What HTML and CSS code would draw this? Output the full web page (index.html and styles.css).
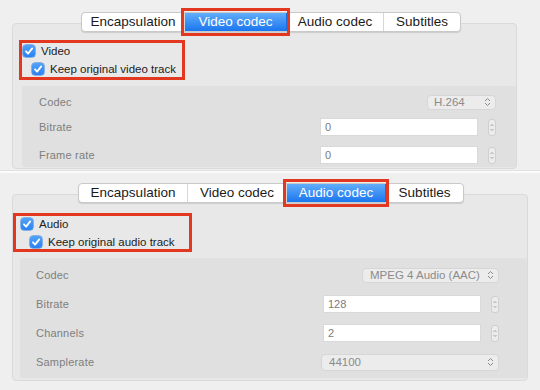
FILE: index.html
```html
<!DOCTYPE html>
<html>
<head>
<meta charset="utf-8">
<link rel="stylesheet" href="styles.css">
</head>
<body>
<div class="shot">
  <section class="panel panel-video">
    <div class="tabs tabs-video">
      <div class="tab">Encapsulation</div>
      <div class="tab selected">Video codec</div>
      <div class="tab">Audio codec</div>
      <div class="tab">Subtitles</div>
    </div>
    <div class="group group-video">
      <div class="checks checks-video">
        <div class="check"><span class="box"><svg width="12" height="12" viewBox="0 0 12 12"><path d="M3 6.3 L5.1 8.6 L9.2 3.4" fill="none" stroke="#fff" stroke-width="1.8" stroke-linecap="round" stroke-linejoin="round"/></svg></span>Video</div>
        <div class="check sub"><span class="box"><svg width="12" height="12" viewBox="0 0 12 12"><path d="M3 6.3 L5.1 8.6 L9.2 3.4" fill="none" stroke="#fff" stroke-width="1.8" stroke-linecap="round" stroke-linejoin="round"/></svg></span>Keep original video track</div>
      </div>
      <div class="settings settings-video">
        <div class="row">
          <span class="label">Codec</span>
          <span class="popup popup-h264"><span class="val">H.264</span><svg class="arrows" width="7" height="10" viewBox="0 0 7 10"><path d="M1 4 L3.5 1.5 L6 4 M1 6 L3.5 8.5 L6 6" fill="none" stroke="#8a8a8a" stroke-width="1"/></svg></span>
        </div>
        <div class="row">
          <span class="label">Bitrate</span>
          <span class="field">0</span>
          <span class="stepper"><svg width="8" height="15" viewBox="0 0 8 15"><path d="M2 5.5 L4 3.5 L6 5.5 M2 9.5 L4 11.5 L6 9.5" fill="none" stroke="#8c8c8c" stroke-width="1"/></svg></span>
        </div>
        <div class="row">
          <span class="label">Frame rate</span>
          <span class="field">0</span>
          <span class="stepper"><svg width="8" height="15" viewBox="0 0 8 15"><path d="M2 5.5 L4 3.5 L6 5.5 M2 9.5 L4 11.5 L6 9.5" fill="none" stroke="#8c8c8c" stroke-width="1"/></svg></span>
        </div>
      </div>
    </div>
  </section>
  <div class="divider"></div>
  <section class="panel panel-audio">
    <div class="tabs tabs-audio">
      <div class="tab">Encapsulation</div>
      <div class="tab">Video codec</div>
      <div class="tab selected">Audio codec</div>
      <div class="tab">Subtitles</div>
    </div>
    <div class="group group-audio">
      <div class="checks checks-audio">
        <div class="check"><span class="box"><svg width="12" height="12" viewBox="0 0 12 12"><path d="M3 6.3 L5.1 8.6 L9.2 3.4" fill="none" stroke="#fff" stroke-width="1.8" stroke-linecap="round" stroke-linejoin="round"/></svg></span>Audio</div>
        <div class="check sub"><span class="box"><svg width="12" height="12" viewBox="0 0 12 12"><path d="M3 6.3 L5.1 8.6 L9.2 3.4" fill="none" stroke="#fff" stroke-width="1.8" stroke-linecap="round" stroke-linejoin="round"/></svg></span>Keep original audio track</div>
      </div>
      <div class="settings settings-audio">
        <div class="row">
          <span class="label">Codec</span>
          <span class="popup popup-mpeg"><span class="val">MPEG 4 Audio (AAC)</span><svg class="arrows" width="7" height="10" viewBox="0 0 7 10"><path d="M1 4 L3.5 1.5 L6 4 M1 6 L3.5 8.5 L6 6" fill="none" stroke="#8a8a8a" stroke-width="1"/></svg></span>
        </div>
        <div class="row">
          <span class="label">Bitrate</span>
          <span class="field">128</span>
          <span class="stepper"><svg width="8" height="15" viewBox="0 0 8 15"><path d="M2 5.5 L4 3.5 L6 5.5 M2 9.5 L4 11.5 L6 9.5" fill="none" stroke="#8c8c8c" stroke-width="1"/></svg></span>
        </div>
        <div class="row">
          <span class="label">Channels</span>
          <span class="field">2</span>
          <span class="stepper"><svg width="8" height="15" viewBox="0 0 8 15"><path d="M2 5.5 L4 3.5 L6 5.5 M2 9.5 L4 11.5 L6 9.5" fill="none" stroke="#8c8c8c" stroke-width="1"/></svg></span>
        </div>
        <div class="row">
          <span class="label">Samplerate</span>
          <span class="popup popup-rate"><span class="val">44100</span><svg class="arrows" width="7" height="10" viewBox="0 0 7 10"><path d="M1 4 L3.5 1.5 L6 4 M1 6 L3.5 8.5 L6 6" fill="none" stroke="#8a8a8a" stroke-width="1"/></svg></span>
        </div>
      </div>
    </div>
  </section>
</div>
</body>
</html>
```

FILE: styles.css
```css
* { box-sizing: border-box; }

html, body {
  margin: 0;
  padding: 0;
  background: #efefef;
}

body {
  font-family: "Liberation Sans", Arial, Helvetica, sans-serif;
  color: #1e1e1e;
}

.shot {
  width: 540px;
  height: 390px;
  overflow: hidden;
  display: flex;
  flex-direction: column;
}

.panel {
  display: flex;
  flex-direction: column;
  background: #efefef;
}

.panel-video {
  height: 170px;
  padding-top: 12px;
}

.divider {
  height: 3px;
  background: #fbfbfb;
  border-top: 1px solid #e2e2e2;
}

.panel-audio {
  flex: 1;
  padding-top: 10px;
}

/* segmented tabs */
.tabs {
  position: relative;
  z-index: 2;
  display: flex;
  height: 20px;
  background: #fff;
  border: 1px solid #c9c9c9;
  border-radius: 4px;
  box-shadow: 0 1px 1px rgba(0, 0, 0, 0.12);
  align-self: flex-start;
}

.tabs-video { margin-left: 81px; }
.tabs-audio { margin-left: 78px; }

.tab {
  position: relative;
  font-size: 13.5px;
  line-height: 18px;
  text-align: center;
  color: #1a1a1a;
  border-right: 1px solid #d6d6d6;
}

.tab:last-child { border-right: none; }

.tabs-video .tab:nth-child(1) { width: 103px; }
.tabs-video .tab:nth-child(2) { width: 102px; }
.tabs-video .tab:nth-child(3) { width: 97px; }
.tabs-video .tab:nth-child(4) { width: 76px; }

.tabs-audio .tab:nth-child(1) { width: 109px; }
.tabs-audio .tab:nth-child(2) { width: 99px; }
.tabs-audio .tab:nth-child(3) { width: 99px; }
.tabs-audio .tab:nth-child(4) { width: 77px; }

.tab.selected {
  color: #fff;
  background: linear-gradient(#62adfa, #1a76ef);
  border-right-color: #1a6fe0;
}

.tab.selected::after {
  content: "";
  position: absolute;
  left: -4px;
  right: -4px;
  top: -5px;
  bottom: -5px;
  border: 3px solid #e2381f;
}

/* group box */
.group {
  display: flex;
  flex-direction: column;
  background: #e8e8e8;
  border: 1px solid #dadada;
  border-radius: 4px;
}

.group-video {
  margin-top: -9px;
  margin-left: 12px;
  width: 505px;
  height: 146px;
  padding-top: 16px;
}

.group-audio {
  margin-top: -9px;
  margin-left: 12px;
  width: 516px;
  height: 187px;
  padding-top: 18px;
}

/* red highlighted checkbox block */
.checks {
  display: flex;
  flex-direction: column;
  border: 3px solid #e2381f;
  font-size: 11.5px;
  color: #1c1c1c;
}

.checks-video {
  margin-left: 6px;
  width: 166px;
  height: 40px;
  padding: 0 0 0 1px;
}

.checks-audio {
  margin-left: 0;
  width: 179px;
  height: 39px;
  padding: 0 0 0 5px;
}

.check {
  display: flex;
  align-items: center;
  height: 17px;
  gap: 6px;
}

.check.sub { margin-top: 3px; padding-left: 9px; }

.box {
  display: inline-flex;
  width: 12px;
  height: 12px;
  border-radius: 3px;
  background: linear-gradient(#52a2f8, #2a82f2);
  box-shadow: 0 0 0 0.5px #2a78de;
}

/* settings area */
.settings {
  display: flex;
  flex-direction: column;
  background: #e0e0e0;
  border-radius: 2px;
}

.settings-video {
  margin-top: 6px;
  margin-left: 9px;
  height: 81px;
  padding: 7px 20px 0 17px;
}

.settings-video .row:nth-child(2) { margin-top: 7px; }
.settings-video .row:nth-child(3) { margin-top: 10px; }

.settings-audio {
  margin-top: 6px;
  margin-left: 7px;
  height: 120px;
  padding: 8px 28px 0 16px;
  gap: 11px;
}

.row {
  display: flex;
  align-items: center;
  height: 18px;
}

.label {
  flex: 1;
  font-size: 11px;
  color: #7e7e7e;
  letter-spacing: 0.2px;
}

.field {
  width: 158px;
  height: 18px;
  background: #fff;
  border: 1px solid #d9d9d9;
  font-size: 11px;
  line-height: 16px;
  padding-left: 4px;
  color: #7b7b7b;
}

.stepper {
  display: inline-flex;
  align-items: center;
  justify-content: center;
  margin-left: 10px;
  width: 8px;
  height: 17px;
  border: 1px solid #cfcfcf;
  border-radius: 3px;
  background: #ececec;
}

.popup {
  display: flex;
  align-items: center;
  justify-content: space-between;
  background: #ececec;
  border: 1px solid #d6d6d6;
  border-radius: 4px;
  font-size: 11.5px;
  color: #8b8b8b;
  padding: 0 4px 0 6px;
}

.popup-h264 { width: 69px; height: 15px; }
.popup-mpeg { width: 137px; height: 15px; padding-left: 7px; }
.popup-rate { width: 178px; height: 17px; padding-left: 7px; }

.arrows { flex: none; }
```
